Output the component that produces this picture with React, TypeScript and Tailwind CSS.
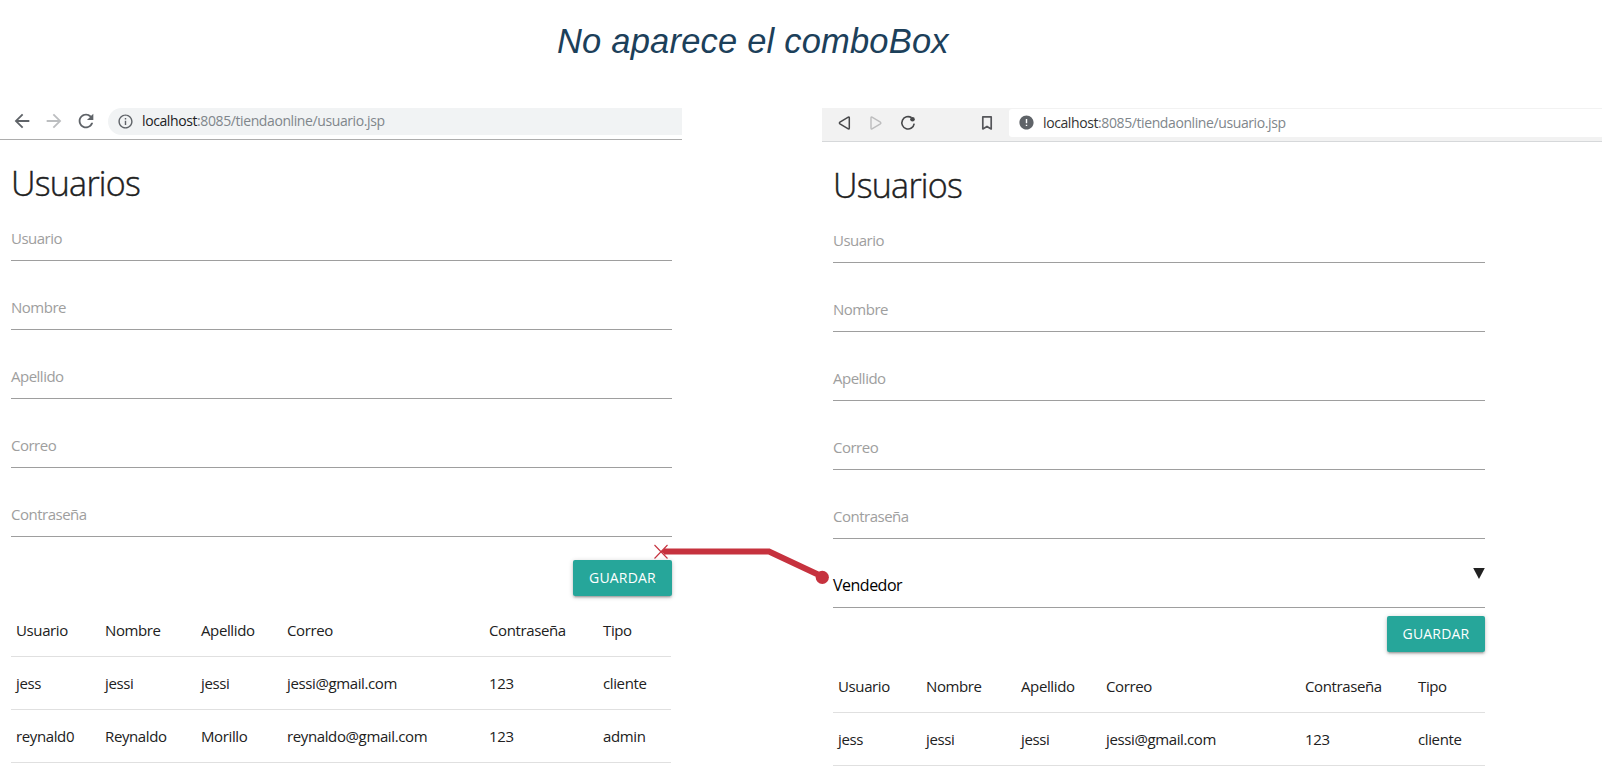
import type { ReactNode } from 'react';
import { MdArrowBack, MdArrowForward, MdError, MdInfoOutline, MdRefresh } from 'react-icons/md';

const FIELDS = ['Usuario', 'Nombre', 'Apellido', 'Correo', 'Contraseña'];
const HEADERS = ['Usuario', 'Nombre', 'Apellido', 'Correo', 'Contraseña', 'Tipo'];
const JESS = ['jess', 'jessi', 'jessi', 'jessi@gmail.com', '123', 'cliente'];
const REYNALDO = ['reynald0', 'Reynaldo', 'Morillo', 'reynaldo@gmail.com', '123', 'admin'];

function IconBox({ children }: { children: ReactNode }) {
  return <span className="flex w-8 shrink-0 items-center justify-center">{children}</span>;
}

function Url({ hostClass }: { hostClass: string }) {
  return (
    <span className="whitespace-nowrap text-sm leading-[26px] tracking-[-0.4px] text-[#80868b]">
      <span className={hostClass}>localhost</span>:8085/tiendaonline/usuario.jsp
    </span>
  );
}

function ChromeBar() {
  return (
    <div className="flex h-8 border-b border-[#adadad] pl-[5.5px]">
      <div className="flex h-[26px] text-[#5f6368]">
        <IconBox><MdArrowBack size={22} /></IconBox>
        <IconBox><MdArrowForward size={22} className="text-[#bcbec0]" /></IconBox>
        <IconBox><MdRefresh size={22} /></IconBox>
      </div>
      <div className="ml-[6.5px] flex h-[27px] flex-1 rounded-l-full bg-[#f1f3f4] pl-[9px]">
        <MdInfoOutline size={17} className="mt-[4.5px] mr-2 text-[#5f6368]" />
        <Url hostClass="text-[#202124]" />
      </div>
    </div>
  );
}

function OperaBar() {
  return (
    <div className="flex h-[34px] border-b border-[#d6d8da] bg-[#f2f2f2] pl-1.5">
      <div className="flex h-[30px] text-[#47484a]">
        <IconBox>
          <svg width="16" height="16" viewBox="0 0 16 16" fill="none" stroke="currentColor" strokeWidth="1.5" strokeLinejoin="round">
            <path d="M12.3 2.1 3.9 7.2q-1 .8 0 1.6l8.4 5.1q1 .4 1-.8V2.9q0-1.2-1-.8Z" />
          </svg>
        </IconBox>
        <IconBox>
          <svg width="16" height="16" viewBox="0 0 16 16" fill="none" stroke="#bdbdbe" strokeWidth="1.4" strokeLinejoin="round">
            <path d="m4 2.1 8.4 5.1q1 .8 0 1.6L4 13.9q-1 .4-1-.8V2.9q0-1.2 1-.8Z" />
          </svg>
        </IconBox>
        <IconBox>
          <svg width="16" height="16" viewBox="0 0 16 16" fill="none" stroke="currentColor" strokeWidth="1.6">
            <path d="M11.6 2.7A6.2 6.2 0 1 0 14.2 8.7" />
            <circle cx="12.5" cy="4.2" r="2.3" fill="currentColor" stroke="none" />
          </svg>
        </IconBox>
      </div>
      <div className="ml-[47px] flex h-[30px] text-[#55565a]">
        <IconBox>
          <svg width="16" height="16" viewBox="0 0 16 16" fill="none" stroke="currentColor" strokeWidth="1.7" strokeLinejoin="round">
            <path d="M3.8 1.9h8.4v12L8 11.4l-4.2 2.5Z" />
          </svg>
        </IconBox>
      </div>
      <div className="mt-px ml-1.5 flex h-7 flex-1 rounded-l-[3px] bg-white pl-[9px]">
        <MdError size={17} className="mt-[5px] mr-2 text-[#5f6368]" />
        <span className="pt-px"><Url hostClass="text-[#333333]" /></span>
      </div>
    </div>
  );
}

function Heading() {
  return (
    <h1 className="pt-[34px] text-[34px] leading-[18px] tracking-[-0.75px] [-webkit-text-stroke:0.4px_#212121]">
      Usuarios
    </h1>
  );
}

function Fields() {
  return (
    <>
      {FIELDS.map((name) => (
        <div key={name} className="flex h-[69px] flex-col justify-end border-b border-[#9e9e9e] pb-3">
          <label className="text-[15px] leading-5 font-normal tracking-[-0.5px] text-[#9e9e9e]">{name}</label>
        </div>
      ))}
    </>
  );
}

function SaveButton({ className }: { className: string }) {
  return (
    <div className={className}>
      <button className="h-9 w-full rounded-[2px] bg-[#26a69a] text-center text-sm leading-9 font-normal tracking-[0.2px] text-white shadow-[0_2px_2px_0_rgba(0,0,0,0.14),0_3px_1px_-2px_rgba(0,0,0,0.12),0_1px_5px_0_rgba(0,0,0,0.2)]">
        GUARDAR
      </button>
    </div>
  );
}

function Row({ cells, columns }: { cells: string[]; columns: string }) {
  return (
    <div role="row" className={`grid h-[53px] border-b border-[#e0e0e0] py-4 ${columns}`}>
      {cells.map((cell, i) => (
        <span key={i} role="cell" className="pl-[5px] text-[15px] leading-5 font-normal tracking-[-0.38px] whitespace-nowrap">
          {cell}
        </span>
      ))}
    </div>
  );
}

const LEFT_COLUMNS = 'grid-cols-[89px_96px_86px_202px_114px_73px]';
const RIGHT_COLUMNS = 'grid-cols-[88px_95px_85px_199px_113px_72px]';

export default function App() {
  return (
    <main className="relative h-[778px] w-[1602px] overflow-hidden bg-white font-['Open_Sans',sans-serif] text-[#212121]">
      <header className="h-[108px] pt-5 pl-[557px] font-['Liberation_Sans',sans-serif] text-[34.5px] leading-[42px] tracking-[0.2px] whitespace-nowrap text-[#1c405a] italic">
        No aparece el comboBox
      </header>
      <div className="flex justify-between">
        <section className="w-[682px]">
          <ChromeBar />
          <div className="ml-[11px] w-[661px] font-light">
            <Heading />
            <Fields />
            <SaveButton className="mt-[23px] ml-auto w-[99px]" />
            <div role="table" className="mt-2 w-[660px]">
              <Row cells={HEADERS} columns={LEFT_COLUMNS} />
              <Row cells={JESS} columns={LEFT_COLUMNS} />
              <Row cells={REYNALDO} columns={LEFT_COLUMNS} />
            </div>
          </div>
        </section>
        <section className="w-[780px]">
          <OperaBar />
          <div className="ml-[11px] w-[652px] font-light">
            <Heading />
            <Fields />
            <div className="flex h-[69px] items-end justify-between border-b border-[#9e9e9e] pb-3 text-black">
              <span className="text-base leading-5 font-normal tracking-[-0.5px]">Vendedor</span>
              <svg width="12" height="11" viewBox="0 0 12 11" className="mb-4 fill-[#212121]">
                <path d="M.2 0h11.6L6 11Z" />
              </svg>
            </div>
            <SaveButton className="mt-2 ml-auto w-[98px]" />
            <div role="table" className="mt-2">
              <Row cells={HEADERS} columns={RIGHT_COLUMNS} />
              <Row cells={JESS} columns={RIGHT_COLUMNS} />
            </div>
          </div>
        </section>
      </div>
      <svg className="absolute top-[540px] left-[650px]" width="184" height="50" viewBox="650 540 184 50" fill="none" stroke="#c6323e">
        <path d="m654.5 545 13 13.5M667.5 545l-13 13.5" strokeWidth="1.1" />
        <path d="m660.5 551.5 5-3v6Z" fill="#c6323e" stroke="none" />
        <path d="M664 551.5h105L818 574.5" strokeWidth="6" />
        <circle cx="822.3" cy="577.3" r="6.6" fill="#c6323e" stroke="none" />
      </svg>
    </main>
  );
}
